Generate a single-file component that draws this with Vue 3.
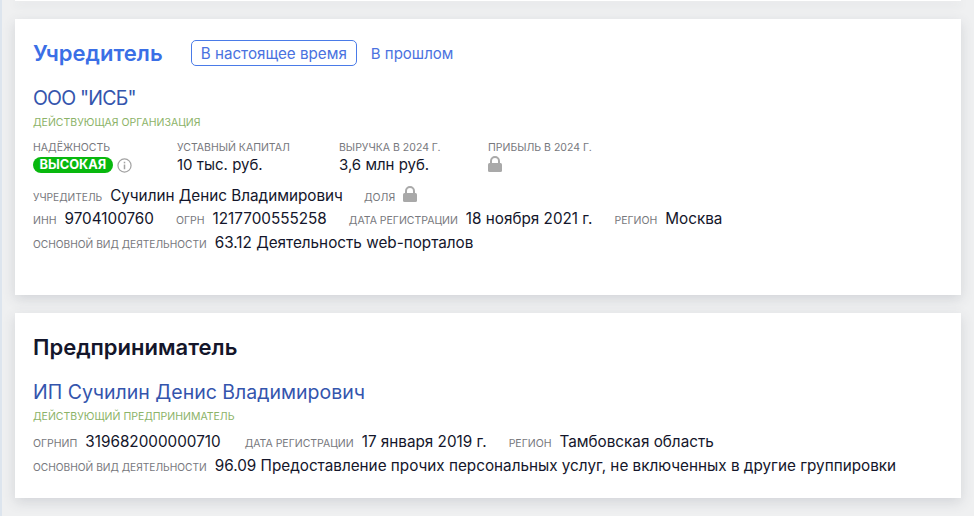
<script setup>
const stats = [
  { label: 'Уставный капитал', value: '10 тыс. руб.', width: '162px' },
  { label: 'Выручка в 2024 г.', value: '3,6 млн руб.', width: '149px' },
  { label: 'Прибыль в 2024 г.', locked: true }
]
</script>

<template>
  <div class="page">
    <div class="stub"></div>

    <section class="card founder">
      <div class="head">
        <h2 class="title blue">Учредитель</h2>
        <button class="tab active">В настоящее время</button>
        <button class="tab">В прошлом</button>
      </div>
      <a class="org short">ООО "ИСБ"</a>
      <div class="status">Действующая организация</div>

      <div class="stats">
        <div class="stat first">
          <div class="label">Надёжность</div>
          <div class="rating">
            <span class="badge">ВЫСОКАЯ</span>
            <svg class="info" viewBox="0 0 16 16" width="15" height="15">
              <circle cx="8" cy="8" r="7" fill="none" stroke="#a3a3a3" stroke-width="1.3" />
              <rect x="7.2" y="7" width="1.6" height="5" fill="#a3a3a3" />
              <rect x="7.2" y="4" width="1.6" height="1.7" fill="#a3a3a3" />
            </svg>
          </div>
        </div>
        <div v-for="s in stats" :key="s.label" class="stat" :style="{ width: s.width }">
          <div class="label">{{ s.label }}</div>
          <div v-if="s.value" class="value">{{ s.value }}</div>
          <svg v-else class="lock" viewBox="0 0 14 16" width="14" height="16">
            <path d="M3 7V5a4 4 0 0 1 8 0v2" fill="none" stroke="#a9a9a9" stroke-width="2" />
            <rect x="0" y="7" width="14" height="9" rx="1.5" fill="#a9a9a9" />
          </svg>
        </div>
      </div>

      <div class="row person">
        <span class="key founder-key">учредитель</span><span class="val">Сучилин Денис Владимирович</span>
        <span class="key share">доля</span>
        <svg class="lock" viewBox="0 0 14 16" width="14" height="16">
          <path d="M3 7V5a4 4 0 0 1 8 0v2" fill="none" stroke="#a9a9a9" stroke-width="2" />
          <rect x="0" y="7" width="14" height="9" rx="1.5" fill="#a9a9a9" />
        </svg>
      </div>
      <div class="row">
        <span class="key">инн</span><span class="val gap">9704100760</span>
        <span class="key">огрн</span><span class="val gap">1217700555258</span>
        <span class="key">дата регистрации</span><span class="val gap">18 ноября 2021 г.</span>
        <span class="key">регион</span><span class="val">Москва</span>
      </div>
      <div class="row">
        <span class="key long">основной вид деятельности</span><span class="val">63.12 Деятельность web-порталов</span>
      </div>
    </section>

    <section class="card">
      <h2 class="title">Предприниматель</h2>
      <a class="org ip">ИП Сучилин Денис Владимирович</a>
      <div class="status">Действующий предприниматель</div>
      <div class="row second">
        <span class="key">огрнип</span><span class="val gap wide">319682000000710</span>
        <span class="key">дата регистрации</span><span class="val gap">17 января 2019 г.</span>
        <span class="key">регион</span><span class="val">Тамбовская область</span>
      </div>
      <div class="row">
        <span class="key long">основной вид деятельности</span><span class="val">96.09 Предоставление прочих персональных услуг, не включенных в другие группировки</span>
      </div>
    </section>
  </div>
</template>

<style>
html, body {
  margin: 0;
  background: #eff0f1;
}
</style>

<style scoped>
.page {
  width: 974px;
  height: 516px;
  box-sizing: border-box;
  padding: 0 13px 0 13px;
  overflow: hidden;
  background: #eff0f1;
  border-left: 2px solid #dde5ee;
  font-family: Inter, Roboto, sans-serif;
  color: #14162b;
}

.stub {
  height: 1px;
  margin-bottom: 18px;
  background: #fff;
  box-shadow: 0 3px 8px rgba(60, 70, 90, 0.25);
}

.card {
  background: #fff;
  box-shadow: 0 4px 12px rgba(60, 70, 90, 0.16);
  padding: 20px 18px 0;
  height: 185px;
  box-sizing: border-box;
  margin-bottom: 18px;
}

.founder {
  height: 276px;
  padding-top: 21px;
}

.head {
  display: flex;
  align-items: center;
  height: 26px;
}

.title {
  margin: 0;
  font-size: 22px;
  line-height: 28px;
  font-weight: 600;
}

.blue {
  color: #3b6fe6;
  margin-right: 28px;
}

.tab {
  background: none;
  border: 0;
  padding: 0;
  font: inherit;
  font-size: 15px;
  color: #4a72e0;
}

.tab.active {
  font-size: 15.2px;
  border: 1.5px solid #4a7be8;
  border-radius: 5px;
  padding: 0 9px;
  height: 26px;
  box-sizing: border-box;
  margin-right: 14px;
}

.org {
  display: block;
  margin-top: 20px;
  font-size: 19.5px;
  line-height: 24px;
  color: #3455ad;
}

.short {
  letter-spacing: -0.8px;
}

.ip {
  margin-top: 19px;
}

.status {
  margin-top: 6px;
  font-size: 10.5px;
  line-height: 13px;
  text-transform: uppercase;
  color: #8cb368;
}

.stats {
  display: flex;
  margin-top: 13px;
  margin-bottom: 9px;
}

.stat.first {
  width: 144px;
}

.label {
  font-size: 10.5px;
  line-height: 12px;
  color: #77787d;
  text-transform: uppercase;
}

.value {
  font-size: 15px;
  line-height: 20px;
  margin-top: 1px;
}

.rating {
  display: flex;
  align-items: center;
  gap: 4px;
  margin-top: 3px;
}

.badge {
  background: #08b80e;
  color: #fff;
  font-weight: 700;
  font-size: 12.8px;
  line-height: 16px;
  padding: 0 6.5px;
  border-radius: 8px;
}

.info {
  display: block;
}

.lock {
  display: block;
  margin-top: 2px;
}

.row {
  display: flex;
  align-items: baseline;
  height: 24px;
  white-space: nowrap;
}

.second {
  margin-top: 7px;
}

.person {
  height: 23px;
}

.person .lock {
  align-self: center;
  margin: -3px 0 0 8px;
}

.key {
  font-size: 10.5px;
  color: #77787d;
  text-transform: uppercase;
  margin-right: 8px;
}

.founder-key {
  font-size: 10.2px;
}

.long {
  font-size: 10.2px;
}

.val {
  font-size: 15.27px;
  line-height: 24px;
}

.gap {
  margin-right: 22px;
}

.wide {
  margin-right: 24px;
}

.share {
  margin-left: 21px;
  margin-right: 0;
}
</style>
